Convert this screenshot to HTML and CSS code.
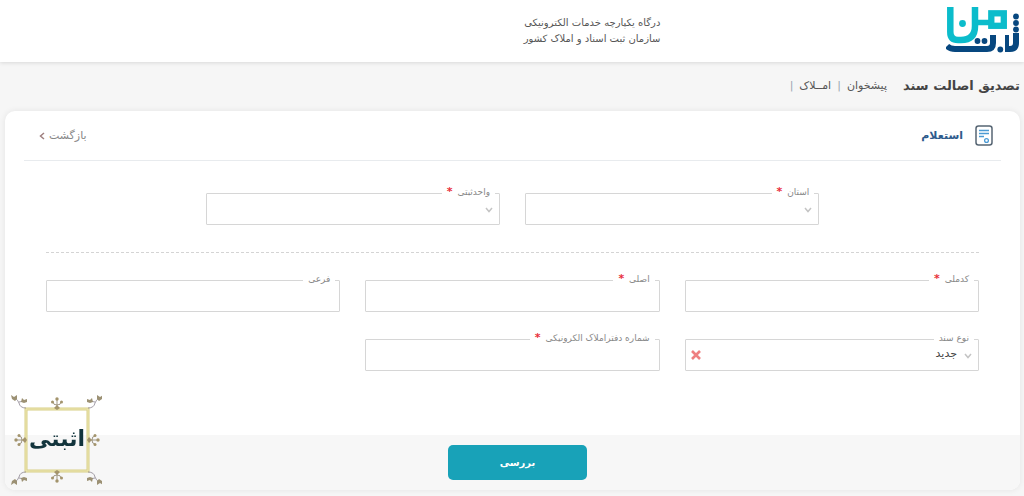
FILE: index.html
```html
<!DOCTYPE html>
<html lang="fa" dir="rtl">
<head>
    <meta charset="UTF-8">
    <meta name="viewport" content="width=device-width, initial-scale=1.0">
    <title>تصدیق اصالت سند</title>
    <link rel="stylesheet" href="styles.css">
</head>
<body>
    <header class="topbar">
        <div class="logo">
            <svg width="74" height="48" viewBox="0 0 74 48" role="img" aria-label="ثبت من">
                <g fill="none" stroke="#07477f" stroke-width="6">
                    <path d="M70 26V36Q70 42 64 42H59"/>
                    <path d="M61 28V42" stroke-width="4"/>
                    <path d="M1 39Q4 42 9 42H41Q47 42 47 36V28"/>
                </g>
                <g fill="none" stroke="#0bbccb">
                    <path stroke-width="6.500" d="M4.300 0V25Q4.300 33 12 33H15Q29 33 29 19V0"/>
                    <path stroke-width="5.500" d="M31 15.500H43"/>
                    <rect stroke-width="6.300" x="45.300" y="6.300" width="12.500" height="12.500"/>
                </g>
                <circle cx="16.500" cy="16.500" r="3.400" fill="#0bbccb"/>
                <g fill="#07477f">
                    <circle cx="70" cy="9.500" r="2.900"/>
                    <circle cx="70" cy="16" r="2.900"/>
                    <circle cx="70" cy="22.500" r="2.900"/>
                    <circle cx="31.500" cy="34" r="2.900"/>
                    <circle cx="38.500" cy="34" r="2.900"/>
                    <circle cx="54.300" cy="42.500" r="2.900"/>
                </g>
            </svg>
        </div>
        <div class="org">
            <div>درگاه یکپارچه خدمات الکترونیکی</div>
            <div>سازمان ثبت اسناد و املاک کشور</div>
        </div>
    </header>

    <div class="page-title">
        <h1>تصدیق اصالت سند</h1>
        <nav class="breadcrumb">
            <a href="#">پیشخوان</a>
            <span class="sep">|</span>
            <a href="#">امــلاک</a>
            <span class="sep">|</span>
        </nav>
    </div>

    <main class="card">
        <div class="card-header">
            <h2>
                <svg width="18" height="21" viewBox="0 0 18 21" fill="none">
                    <rect x="1" y="1" width="16" height="19" rx="2.500" stroke="#566573" stroke-width="1.500"/>
                    <path d="M4 5.500H14M4 8.500H14M4 11.500H9" stroke="#4a9ad4" stroke-width="1.300"/>
                    <circle cx="11.500" cy="15.500" r="1.900" stroke="#4a9ad4" stroke-width="1.300"/>
                </svg>
                استعلام
            </h2>
            <a class="back" href="#">
                بازگشت
                <svg width="6" height="8" viewBox="0 0 6 8" fill="none" stroke="#a08080" stroke-width="1.500"><path d="M5 1L1.500 4L5 7"/></svg>
            </a>
        </div>

        <form id="form-estelam">
            <div class="fields">
                <div class="row row-center">
                    <div class="field">
                        <label for="ostan">استان <b>*</b></label>
                        <select id="ostan" name="ostan" required>
                            <option value=""></option>
                        </select>
                        <svg class="arrow" viewBox="0 0 8 6"><path d="M1 1L4 4.500L7 1"/></svg>
                    </div>
                    <div class="field">
                        <label for="vahed">واحدثبتی <b>*</b></label>
                        <select id="vahed" name="vahed" required>
                            <option value=""></option>
                        </select>
                        <svg class="arrow" viewBox="0 0 8 6"><path d="M1 1L4 4.500L7 1"/></svg>
                    </div>
                </div>

                <hr>

                <div class="row">
                    <div class="field">
                        <label for="codemeli">کدملی <b>*</b></label>
                        <input type="text" id="codemeli" name="codemeli" required>
                    </div>
                    <div class="field">
                        <label for="asli">اصلی <b>*</b></label>
                        <input type="text" id="asli" name="asli" required>
                    </div>
                    <div class="field">
                        <label for="farei">فرعی</label>
                        <input type="text" id="farei" name="farei">
                    </div>
                    <div class="field">
                        <label for="noe-sanad">نوع سند</label>
                        <select id="noe-sanad" name="noe-sanad">
                            <option value="1">جدید</option>
                        </select>
                        <svg class="arrow" viewBox="0 0 8 6"><path d="M1 1L4 4.500L7 1"/></svg>
                        <button type="button" class="clear" aria-label="حذف">
                            <svg width="10" height="10" viewBox="0 0 10 10" stroke="#ee7f80" stroke-width="2.600"><path d="M1 1L9 9M9 1L1 9"/></svg>
                        </button>
                    </div>
                    <div class="field">
                        <label for="daftar">شماره دفتراملاک الکرونیکی <b>*</b></label>
                        <input type="text" id="daftar" name="daftar" required>
                    </div>
                </div>
            </div>

            <div class="card-footer">
                <button type="submit" class="submit">بررسی</button>
            </div>
        </form>
    </main>

    <div class="seal">
        <svg width="92" height="92" viewBox="0 0 92 92">
            <defs>
                <g id="flower">
                    <path d="M0 0V-8M0 -3Q-4 -3 -4 -6M0 -3Q4 -3 4 -6" fill="none" stroke="#8b8068" stroke-width=".8"/>
                    <g fill="#a3946c">
                        <circle cy="-9" r="1.700"/>
                        <circle cx="-4.500" cy="-6" r="1.500"/>
                        <circle cx="4.500" cy="-6" r="1.500"/>
                        <path d="M-3 0L0 -3L3 0L0 2Z"/>
                    </g>
                </g>
                <g id="corner">
                    <path d="M0 0Q-6 0 -7 -5Q-8 -8 -11 -10M-7 -6L-2 -7" fill="none" stroke="#8b8490" stroke-width=".8"/>
                    <path d="M-15 -13L-12 -11L-9 -13L-9 -9L-11 -7L-14 -9ZM-4 -10L-2 -8L1 -9L1 -6L-2 -5L-5 -6Z" fill="#9c9174"/>
                </g>
            </defs>
            <rect x="16" y="15" width="62" height="62" fill="none" stroke="#d8cf86" stroke-width="3"/>
            <rect x="16" y="15" width="62" height="62" fill="none" stroke="#efe9b8" stroke-width="1"/>
            <use href="#flower" transform="translate(47 14)"/>
            <use href="#flower" transform="translate(47 78) rotate(180)"/>
            <use href="#flower" transform="translate(15 46) rotate(-90)"/>
            <use href="#flower" transform="translate(79 46) rotate(90)"/>
            <use href="#corner" transform="translate(16 14)"/>
            <use href="#corner" transform="translate(78 14) scale(-1 1)"/>
            <use href="#corner" transform="translate(16 78) scale(1 -1)"/>
            <use href="#corner" transform="translate(78 78) scale(-1 -1)"/>
            <text x="47" y="52" text-anchor="middle">اثبتی</text>
        </svg>
    </div>
</body>
</html>
```
FILE: styles.css
```css
* {
    box-sizing: border-box;
}
body {
    font-family: 'DejaVu Sans', sans-serif;
    font-size: 11px;
    background: #f6f6f6;
    color: #555;
    margin: 0;
}
a {
    color: inherit;
    text-decoration: none;
}
.topbar {
    display: grid;
    grid-template-columns: 35% auto;
    align-items: center;
    height: 62px;
    padding: 0 4px;
    background: white;
    box-shadow: 0 1px 4px rgba(0,0,0,0.12);
}
.logo svg {
    display: block;
}
.org {
    padding: 0 4px;
    font-size: 10px;
    line-height: 16px;
}
.page-title {
    display: flex;
    align-items: center;
    gap: 16px;
    height: 49px;
    padding: 0 4px 3px;
}
.page-title h1 {
    margin: 0;
    font-size: 13px;
    color: #444;
}
.breadcrumb {
    display: flex;
    gap: 6px;
}
.sep {
    color: #9aa5b1;
}
.card {
    margin: 0 4px 6px 5px;
    background: white;
    border-radius: 10px;
    box-shadow: 0 0 6px rgba(0,0,0,0.08);
    overflow: hidden;
}
.card-header {
    display: flex;
    justify-content: space-between;
    align-items: center;
    height: 50px;
    margin: 0 19px;
    padding: 0 8px 0 15px;
    border-bottom: 1px solid #e8ebee;
}
.card-header h2 {
    display: flex;
    align-items: center;
    gap: 12px;
    margin: 0;
    font-size: 11px;
    color: #2d5b8c;
}
.back {
    display: flex;
    align-items: center;
    gap: 4px;
    color: #888;
}
.fields {
    padding: 32px 41px 64px;
}
.row {
    display: grid;
    grid-template-columns: repeat(3, 1fr);
    gap: 27px 25px;
}
.row-center {
    display: flex;
    justify-content: center;
}
.row-center .field {
    width: calc((100% - 50px) / 3);
}
.fields hr {
    margin: 27px 0;
    border: 0;
    border-top: 1px dashed #d4d4d4;
}
.field {
    position: relative;
}
.field label {
    position: absolute;
    top: -8px;
    right: 5px;
    padding: 0 5px;
    background: white;
    color: #888;
    font-size: 9px;
    line-height: 14px;
}
.field label b {
    margin-right: 2px;
    color: #e8303a;
    font-size: 11px;
    line-height: 11px;
}
.field input, .field select {
    display: block;
    width: 100%;
    height: 32px;
    padding: 0 21px 4px;
    border: 1px solid #d6d6d6;
    border-radius: 1px;
    background: white;
    color: #444;
    font-family: inherit;
    font-size: 11px;
    appearance: none;
}
.arrow {
    position: absolute;
    top: 14px;
    right: 7px;
    width: 8px;
    height: 6px;
    fill: none;
    stroke: #c4c4c4;
    stroke-width: 1.5;
}
.clear {
    position: absolute;
    top: 11px;
    left: 6px;
    padding: 0;
    border: none;
    background: none;
    cursor: pointer;
}
.clear svg {
    display: block;
}
.card-footer {
    display: flex;
    justify-content: center;
    padding: 10px 0 10px 10px;
    background: #f7f7f7;
}
.submit {
    width: 139px;
    height: 35px;
    padding: 0;
    border: none;
    border-radius: 5px;
    background: #18a2b8;
    color: white;
    font-family: inherit;
    font-size: 10px;
    font-weight: bold;
    cursor: pointer;
}
.submit:hover {
    background: #138496;
}
.seal {
    position: fixed;
    left: 10px;
    bottom: 10px;
}
.seal svg {
    display: block;
}
.seal text {
    font-size: 22px;
    font-weight: bold;
    fill: #12343c;
}
```
